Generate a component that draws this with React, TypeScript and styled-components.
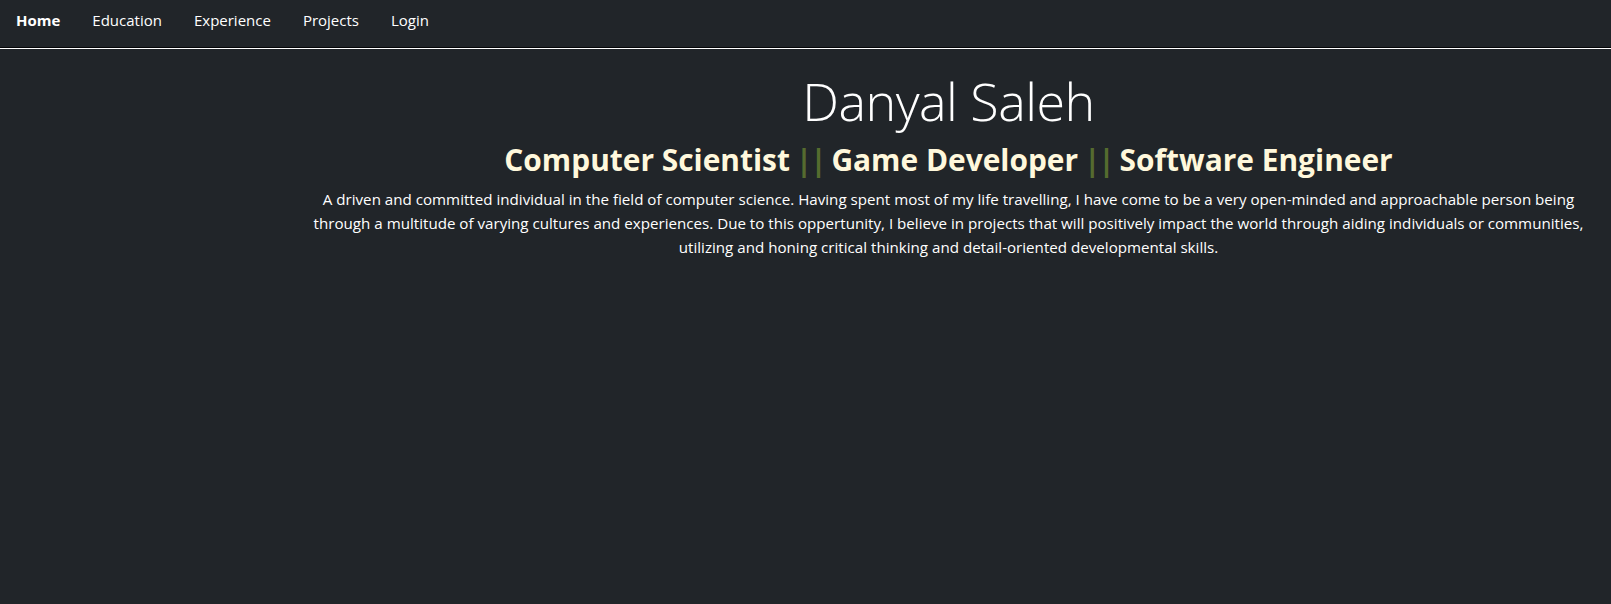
import React from "react";
import styled, { createGlobalStyle } from "styled-components";

const GlobalStyle = createGlobalStyle`
  *, *::before, *::after { box-sizing: border-box; }
  html, body { background: #212529; }
  body {
    margin: 0;
    font-family: "Open Sans", "Noto Sans", sans-serif;
    color: #fff;
  }
`;

const Navbar = styled.nav`
  height: 48px;
  padding-top: 9px;
  border-bottom: 1px solid #050608;
  box-shadow: 0 1px 0 #ffffff;
`;

const NavList = styled.ul`
  display: flex;
  margin: 0;
  padding: 0;
  list-style: none;
`;

const NavLink = styled.a<{ $active?: boolean }>`
  display: block;
  padding: 0 16px;
  font-size: 15px;
  line-height: 22px;
  font-weight: ${(p) => (p.$active ? 700 : 400)};
  color: #fff;
  text-decoration: none;
  cursor: pointer;
`;

const Layout = styled.div`
  display: grid;
  grid-template-columns: 286px 1fr;
`;

const Aside = styled.aside``;

const Main = styled.main`
  padding: 22px 12px 0;
  text-align: center;
`;

const Title = styled.h1`
  margin: 0 0 10px;
  font-size: 52px;
  line-height: 62px;
  font-weight: 300;
  letter-spacing: -0.5px;
  color: #fff;
`;

const Subtitle = styled.h2`
  margin: 0 0 9px;
  font-size: 29.9px;
  line-height: 36px;
  font-weight: 700;
  color: #fff8dc;
`;

const Sep = styled.span`
  margin: 0 -1px 0 -2px;
  letter-spacing: -2px;
  color: #556b2f;
`;

const Bio = styled.p`
  margin: 0;
  font-size: 15.15px;
  line-height: 24px;
  color: #fff;
`;

const links = ["Home", "Education", "Experience", "Projects", "Login"];
const roles = ["Computer Scientist", "Game Developer", "Software Engineer"];

export default function App() {
  return (
    <>
      <GlobalStyle />
      <Navbar>
        <NavList>
          {links.map((l, i) => (
            <li key={l}>
              <NavLink $active={i === 0}>{l}</NavLink>
            </li>
          ))}
        </NavList>
      </Navbar>
      <Layout>
        <Aside />
        <Main>
          <Title>Danyal Saleh</Title>
          <Subtitle>
            {roles.map((r, i) => (
              <React.Fragment key={r}>
                {i > 0 && (
                  <>
                    {" "}
                    <Sep>||</Sep>{" "}
                  </>
                )}
                {r}
              </React.Fragment>
            ))}
          </Subtitle>
          <Bio>
            A driven and committed individual in the field of computer science. Having spent most of my life
            travelling, I have come to be a very open-minded and approachable person being through a multitude of
            varying cultures and experiences. Due to this oppertunity, I believe in projects that will positively
            impact the world through aiding individuals or communities, utilizing and honing critical thinking and
            detail-oriented developmental skills.
          </Bio>
        </Main>
      </Layout>
    </>
  );
}
